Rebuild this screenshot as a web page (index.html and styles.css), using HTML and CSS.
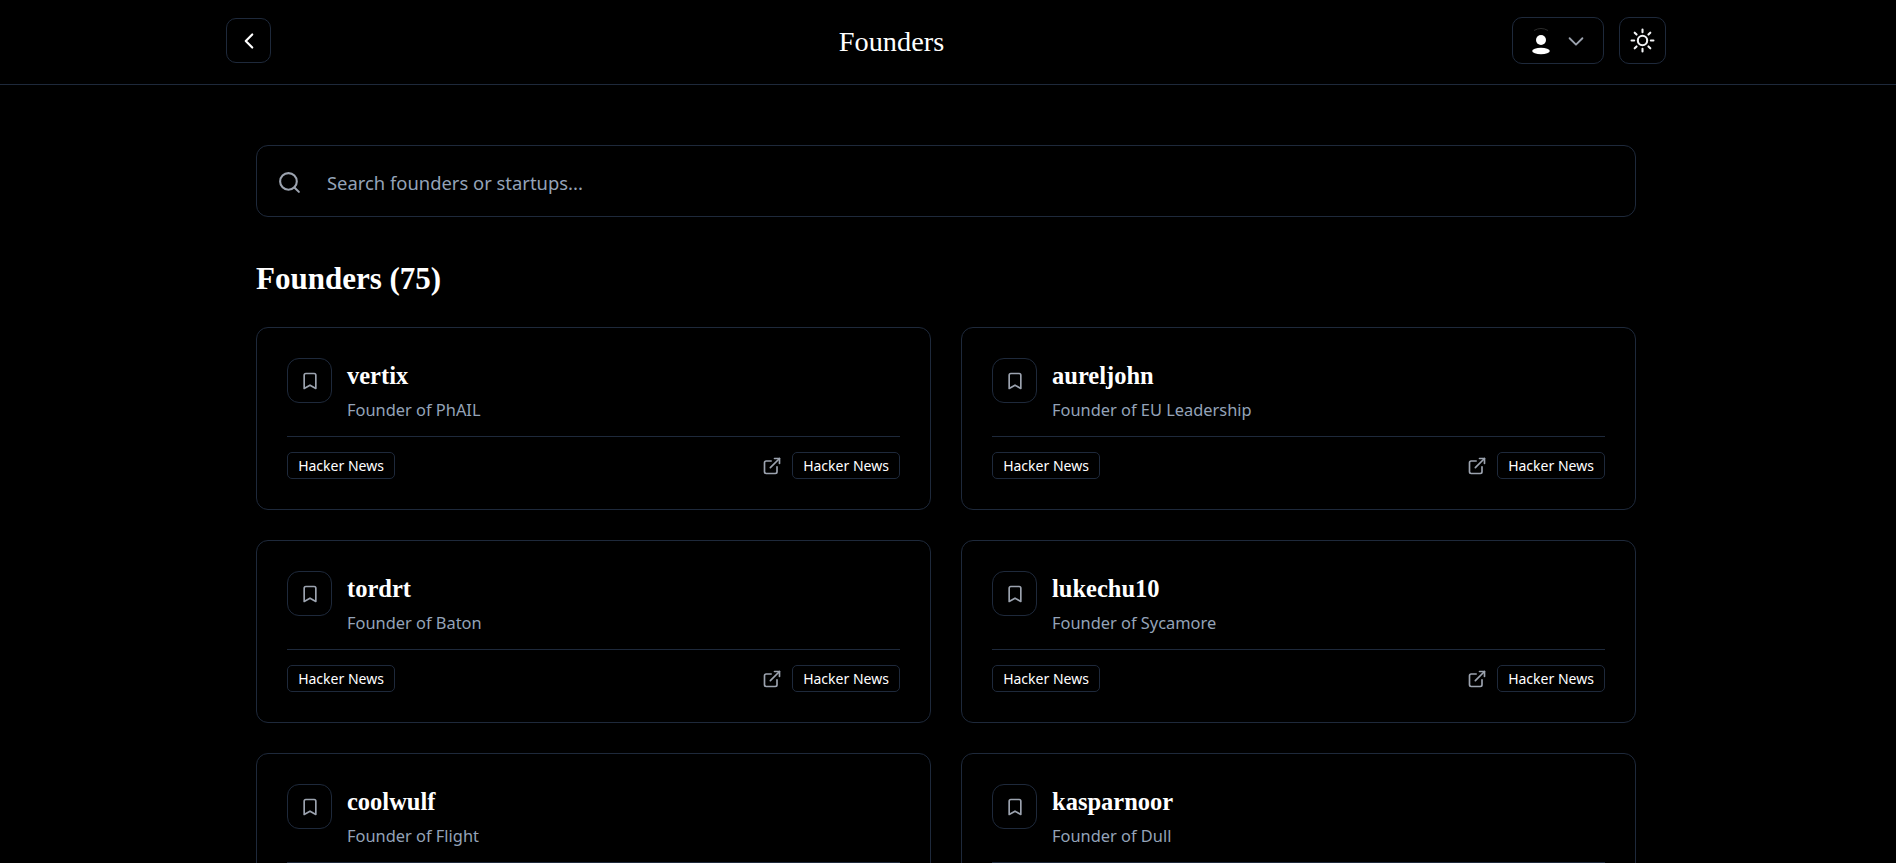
FILE: index.html
```html
<!DOCTYPE html>
<html lang="en">
<head>
<meta charset="utf-8">
<title>Founders</title>
<link rel="stylesheet" href="styles.css">
</head>
<body>
<svg width="0" height="0" class="defs">
  <symbol id="bm" viewBox="0 0 24 24"><path d="M19 21l-7-4-7 4V5a2 2 0 0 1 2-2h10a2 2 0 0 1 2 2z"/></symbol>
  <symbol id="ext" viewBox="0 0 24 24"><path d="M18 13v6a2 2 0 0 1-2 2H5a2 2 0 0 1-2-2V8a2 2 0 0 1 2-2h6"/><path d="M15 3h6v6"/><path d="M10 14L21 3"/></symbol>
</svg>
<header class="topbar">
  <div class="topbar-inner">
    <button class="btn square"><svg class="ico white" viewBox="0 0 24 24"><path d="M15 18l-6-6 6-6"/></svg></button>
    <h1 class="title">Founders</h1>
    <div class="actions">
      <button class="btn user">
        <svg class="avatar" viewBox="0 0 24 30"><path class="avatar-ring" d="M5 4.500a14 14 0 0 1 14 0"/><circle cx="12" cy="14" r="5"/><ellipse cx="12" cy="25" rx="8.800" ry="3.200"/></svg>
        <svg class="ico gray" viewBox="0 0 24 24"><path d="M5 9l7 7 7-7"/></svg>
      </button>
      <button class="btn square light"><svg class="ico sun" viewBox="0 0 24 24"><circle cx="12" cy="12" r="4.500"/><path d="M12 1.500v2.500M12 20v2.500M1.500 12h2.500M20 12h2.500M4.500 4.500l1.800 1.800M17.700 17.700l1.800 1.800M4.500 19.500l1.800-1.800M17.700 6.300l1.800-1.800"/></svg></button>
    </div>
  </div>
</header>
<main class="content">
  <div class="search">
    <svg class="search-ico" viewBox="0 0 24 24"><circle cx="11" cy="11" r="8"/><path d="M21 21l-4.300-4.300"/></svg>
    <span class="placeholder">Search founders or startups...</span>
  </div>
  <h2 class="section">Founders (75)</h2>
  <div class="grid">
    <article class="card"><div class="card-top"><button class="bookmark"><svg class="ico-sm"><use href="#bm"/></svg></button><div><h3 class="name">vertix</h3><p class="role">Founder of PhAIL</p></div></div><div class="card-foot"><span class="tag">Hacker News</span><div class="links"><svg class="ico-ext"><use href="#ext"/></svg><span class="tag">Hacker News</span></div></div></article>
    <article class="card"><div class="card-top"><button class="bookmark"><svg class="ico-sm"><use href="#bm"/></svg></button><div><h3 class="name">aureljohn</h3><p class="role">Founder of EU Leadership</p></div></div><div class="card-foot"><span class="tag">Hacker News</span><div class="links"><svg class="ico-ext"><use href="#ext"/></svg><span class="tag">Hacker News</span></div></div></article>
    <article class="card"><div class="card-top"><button class="bookmark"><svg class="ico-sm"><use href="#bm"/></svg></button><div><h3 class="name">tordrt</h3><p class="role">Founder of Baton</p></div></div><div class="card-foot"><span class="tag">Hacker News</span><div class="links"><svg class="ico-ext"><use href="#ext"/></svg><span class="tag">Hacker News</span></div></div></article>
    <article class="card"><div class="card-top"><button class="bookmark"><svg class="ico-sm"><use href="#bm"/></svg></button><div><h3 class="name">lukechu10</h3><p class="role">Founder of Sycamore</p></div></div><div class="card-foot"><span class="tag">Hacker News</span><div class="links"><svg class="ico-ext"><use href="#ext"/></svg><span class="tag">Hacker News</span></div></div></article>
    <article class="card"><div class="card-top"><button class="bookmark"><svg class="ico-sm"><use href="#bm"/></svg></button><div><h3 class="name">coolwulf</h3><p class="role">Founder of Flight</p></div></div><div class="card-foot"><span class="tag">Hacker News</span><div class="links"><svg class="ico-ext"><use href="#ext"/></svg><span class="tag">Hacker News</span></div></div></article>
    <article class="card"><div class="card-top"><button class="bookmark"><svg class="ico-sm"><use href="#bm"/></svg></button><div><h3 class="name">kasparnoor</h3><p class="role">Founder of Dull</p></div></div><div class="card-foot"><span class="tag">Hacker News</span><div class="links"><svg class="ico-ext"><use href="#ext"/></svg><span class="tag">Hacker News</span></div></div></article>
  </div>
</main>
</body>
</html>
```
FILE: styles.css
```css
* { box-sizing: border-box; }
html, body { height: 100%; }
body {
  margin: 0;
  height: 863px;
  overflow: hidden;
  background: #000;
  color: #fff;
  font-family: "Noto Sans", "Open Sans", sans-serif;
}
.defs { position: absolute; }
.topbar { height: 85px; border-bottom: 1px solid #1e293b; }
.topbar-inner {
  width: 1440px;
  margin-left: 226px;
  padding-top: 18px;
  display: flex;
  justify-content: space-between;
  align-items: flex-start;
}
.btn {
  height: 45px;
  background: #000;
  border: 1px solid #1e293b;
  border-radius: 10px;
  padding: 0;
  display: flex;
  align-items: center;
  justify-content: center;
}
.square { width: 45px; }
.square .white { width: 26px; height: 26px; }
.light { margin-top: -1px; height: 47px; width: 47px; }
.title {
  margin: 3px 0 0 0;
  font-family: "Liberation Serif", "DejaVu Serif", serif;
  font-size: 28.300px;
  line-height: 42px;
  font-weight: 400;
}
.actions { display: flex; gap: 15px; }
.user { width: 92px; height: 47px; margin-top: -1px; gap: 12px; padding-left: 1px; }
.ico { width: 24px; height: 24px; fill: none; stroke-width: 2; stroke-linecap: round; stroke-linejoin: round; }
.white { stroke: #fff; }
.gray { stroke: #9ca3af; width: 22px; height: 22px; }
.sun { stroke: #f3f4f6; width: 25px; height: 25px; }
.avatar { width: 24px; height: 30px; fill: #fff; }
.avatar-ring { fill: none; stroke: #2b2b2b; stroke-width: 1; }
.content { width: 1380px; margin: 60px 0 0 256px; }
.search {
  height: 72px;
  border: 1px solid #1e293b;
  border-radius: 12px;
  display: flex;
  align-items: center;
  padding-left: 20px;
}
.search-ico { width: 25px; height: 25px; margin-top: 2px; fill: none; stroke: #9ca3af; stroke-width: 2; stroke-linecap: round; stroke-linejoin: round; flex: none; }
.placeholder { margin: 2px 0 0 25px; font-size: 18.400px; color: #94a3b8; }
.section {
  margin: 40px 0 0;
  font-family: "Liberation Serif", "DejaVu Serif", serif;
  font-size: 31px;
  line-height: 44px;
  font-weight: 700;
}
.grid { margin-top: 26px; display: grid; grid-template-columns: 675px 675px; column-gap: 30px; row-gap: 30px; }
.card { height: 183px; border: 1px solid #1e293b; border-radius: 12px; padding: 30px; }
.card-top { display: flex; gap: 15px; height: 79px; border-bottom: 1px solid #1e293b; }
.bookmark {
  width: 45px;
  height: 45px;
  background: #000;
  border: 1px solid #1e293b;
  border-radius: 12px;
  padding: 0;
  display: flex;
  align-items: center;
  justify-content: center;
  flex: none;
}
.ico-sm { width: 20px; height: 20px; fill: none; stroke: #9ca3af; stroke-width: 2; stroke-linecap: round; stroke-linejoin: round; }
.ico-ext { width: 20px; height: 20px; fill: none; stroke: #9ca3af; stroke-width: 2; stroke-linecap: round; stroke-linejoin: round; }
.name {
  margin: 2px 0 0;
  font-family: "Liberation Serif", "DejaVu Serif", serif;
  font-size: 24.500px;
  line-height: 32px;
  font-weight: 700;
}
.role { margin: 6px 0 0; font-size: 16.400px; line-height: 24px; color: #94a3b8; }
.card-foot { display: flex; justify-content: space-between; align-items: center; margin-top: 15px; }
.links { display: flex; align-items: center; gap: 10px; }
.tag {
  display: block;
  height: 27px;
  width: 108px;
  border: 1px solid #1e293b;
  border-radius: 5px;
  font-size: 14px;
  line-height: 26px;
  text-align: center;
  color: #fff;
}
```
